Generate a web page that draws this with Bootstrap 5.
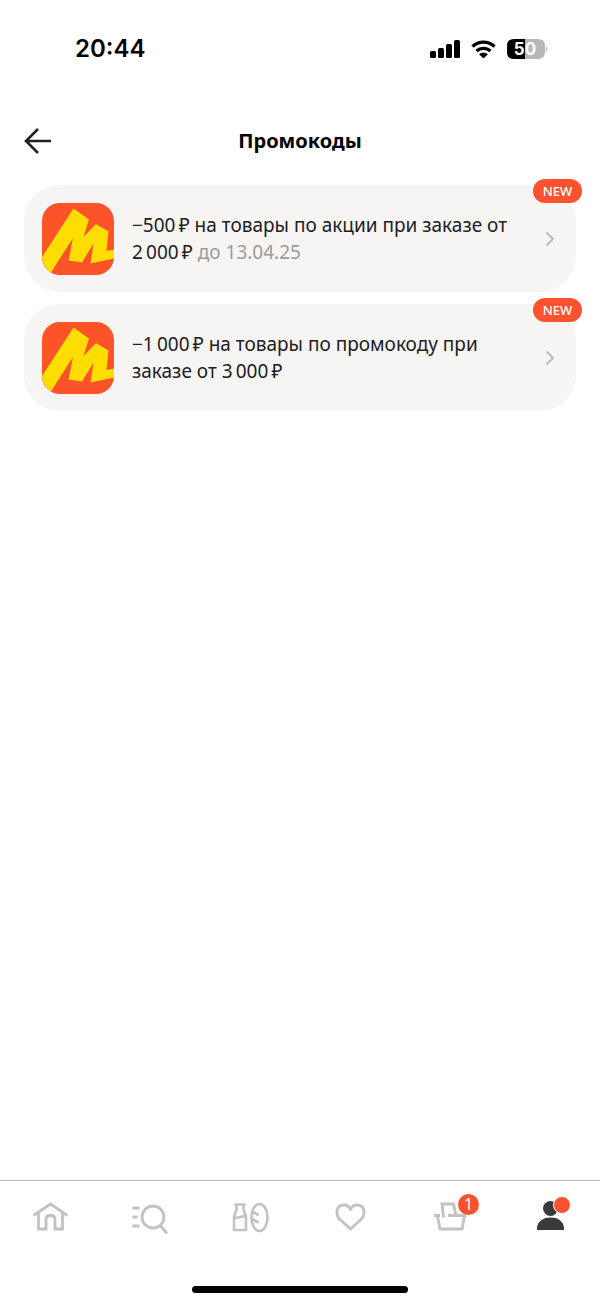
<!DOCTYPE html>
<html lang="ru">
<head>
<meta charset="utf-8">
<meta name="viewport" content="width=device-width, initial-scale=1">
<title>Промокоды</title>
<link href="https://cdn.jsdelivr.net/npm/bootstrap@5.3.0/dist/css/bootstrap.min.css" rel="stylesheet">
<style>
  body { font-family: "Noto Sans", sans-serif; background: #fff; color: #21201f; }
  .status-bar { height: 97px; padding: 0 52px 0 75px; }
  .clock { font: 600 24px/32px Inter, sans-serif; color: #000; }
  .page-head { height: 88px; padding-top: 30px; }
  .page-title { font-size: 20px; line-height: 28px; font-weight: 700; color: #000; }
  .back-btn { left: 24px; top: 28px; line-height: 0; }
  .promo-list { gap: 12px; padding: 0 24px; }
  .promo { background: #f6f5f4; border-radius: 36px; padding: 18px 18px 17px; gap: 18px; color: #21201f; font-size: 19px; line-height: 27px; }
  .promo:hover { color: #21201f; }
  .promo .until { color: #9e9b98; }
  .tag-new { top: -6px; right: -6px; width: 49px; height: 24px; border-radius: 12px; background: #fc5230; color: #fff; font-size: 13px; line-height: 24px; font-weight: 500; }
  .tab-bar { border-top: 1px solid #b9b9b9; height: 124px; background: #fff; }
  .tab-bar a { color: #c4c2bf; padding-top: 9px; line-height: 0; }
  .tab-bar a.active { color: #3b3a39; }
  .tab-icon { width: 60px; height: 50px; }
  .cart-count { left: 38px; top: 4px; width: 21px; height: 21px; background: #fc5230; color: #fff; font-size: 16px; line-height: 21px; }
  .profile-dot { left: 33px; top: 6px; width: 18px; height: 18px; background: #fc5230; border: 1px solid #fff; }
  .home-indicator { width: 36%; height: 7px; background: #000; margin-bottom: 11px; }
</style>
</head>
<body class="d-flex flex-column min-vh-100">
  <svg class="d-none" aria-hidden="true">
    <symbol id="market-logo" viewBox="0 0 72 72">
      <rect width="72" height="72" rx="18" fill="#fc5328"/>
      <path fill="#fd0" d="M0 54 31.500 5.500 47 16.500 41.500 34 54 21 66.500 28.500 64.500 48 72 46.500V55.500L48.500 60.500 51.500 40.500 40 59.500 26.500 57.500 31 35 9 69.500Q1 65 0 54Z"/>
    </symbol>
    <symbol id="chevron" viewBox="0 0 16 20">
      <path d="m5 4 6 6-6 6" fill="none" stroke="#bfbdbb" stroke-width="2" stroke-linecap="round" stroke-linejoin="round"/>
    </symbol>
  </svg>

  <div class="status-bar d-flex align-items-center justify-content-between">
    <span class="clock">20:44</span>
    <div class="d-flex align-items-center">
      <svg width="118" height="24" viewBox="0 0 118 24" role="img" aria-label="Сеть, Wi-Fi, заряд 50%">
        <rect x="0" y="14" width="6" height="7" rx="1.5"/><rect x="8" y="11" width="6" height="10" rx="1.5"/>
        <rect x="16" y="7" width="6" height="14" rx="1.5"/><rect x="24" y="3" width="6" height="18" rx="1.5"/>
        <g fill="none" stroke="#000" stroke-width="3.4"><path d="M42.5 9.5a16 16 0 0 1 22 0M46.5 14a10.500 10.500 0 0 1 14 0"/></g>
        <path d="M49 17.200a6.500 6.500 0 0 1 9 0L53.500 21.500Z"/>
        <path d="M84 2h11v20H84q-7 0-7-7V9q0-7 7-7Z"/><path fill="#b8b8b8" d="M95 2h13q7 0 7 7v6q0 7-7 7H95ZM116 9q3 3 0 6Z"/>
        <text x="95" y="18" text-anchor="middle" fill="#fff" font-family="Inter, sans-serif" font-size="17" font-weight="700">50</text>
      </svg>
    </div>
  </div>

  <header class="page-head position-relative text-center">
    <button type="button" class="btn border-0 p-0 back-btn position-absolute" aria-label="Назад">
      <svg width="28" height="32" viewBox="0 0 28 32" fill="none" stroke="#21201f" stroke-width="2.600"><path d="M27 16H3M14 4 2 16l12 12"/></svg>
    </button>
    <h1 class="page-title m-0">Промокоды</h1>
  </header>

  <main class="promo-list d-flex flex-column flex-grow-1">
    <a href="#" class="promo d-flex align-items-center position-relative text-decoration-none">
      <svg class="flex-shrink-0" width="72" height="72" role="img" aria-label="Маркет"><use href="#market-logo"/></svg>
      <span class="flex-grow-1">−500&#8201;₽ на товары по акции при заказе от<br>2&#8201;000&#8201;₽ <span class="until">до 13.04.25</span></span>
      <svg class="flex-shrink-0" width="16" height="20" aria-hidden="true"><use href="#chevron"/></svg>
      <span class="tag-new position-absolute text-center">NEW</span>
    </a>
    <a href="#" class="promo d-flex align-items-center position-relative text-decoration-none">
      <svg class="flex-shrink-0" width="72" height="72" role="img" aria-label="Маркет"><use href="#market-logo"/></svg>
      <span class="flex-grow-1">−1&#8201;000&#8201;₽ на товары по промокоду при<br>заказе от 3&#8201;000&#8201;₽</span>
      <svg class="flex-shrink-0" width="16" height="20" aria-hidden="true"><use href="#chevron"/></svg>
      <span class="tag-new position-absolute text-center">NEW</span>
    </a>
  </main>

  <footer class="tab-bar d-flex flex-column justify-content-between sticky-bottom">
    <nav class="d-flex text-center">
      <a href="#" class="flex-fill" aria-label="Главная">
        <svg class="tab-icon" viewBox="0 0 60 50" fill="none" stroke="currentColor" stroke-width="2.800"><path d="M13.500 25.500 30.500 14l17 11.500M18.500 23v16H26V29.500q0-4 4.500-4t4.500 4V39h7.500V23"/></svg>
      </a>
      <a href="#" class="flex-fill" aria-label="Каталог">
        <svg class="tab-icon" viewBox="0 0 60 50" fill="none" stroke="currentColor" stroke-width="2.800"><path d="M12.500 18h7M12.500 27h5M12.500 36h7M40 35l7 8.500"/><circle cx="33" cy="27" r="11"/></svg>
      </a>
      <a href="#" class="flex-fill" aria-label="Продукты">
        <svg class="tab-icon" viewBox="0 0 60 50" fill="none" stroke="currentColor" stroke-width="2.600" stroke-linejoin="round"><path d="M14.500 14.500h11M16.500 14.500v4q0 2-1 4l-1.500 4V40h12V26.500l-1.500-4q-1-2-1-4v-4M14 28q3 0 6-1t6-1"/><ellipse cx="39.500" cy="27.500" rx="8" ry="13.500"/><path d="m32 21.500 6.500 3.500M32 29l6.500 3.500"/></svg>
      </a>
      <a href="#" class="flex-fill" aria-label="Избранное">
        <svg class="tab-icon" viewBox="0 0 60 50" fill="none" stroke="currentColor" stroke-width="2.800" stroke-linejoin="round"><path d="M30.500 39 19.500 29Q17 26.500 17 22.500 17 15 24 15q4.500 0 6.500 4.500Q32.500 15 37 15q7 0 7 7.500 0 4-2.500 6.500Z"/></svg>
      </a>
      <a href="#" class="flex-fill" aria-label="Корзина">
        <span class="position-relative d-inline-block">
          <svg class="tab-icon" viewBox="0 0 60 50" fill="none" stroke="currentColor" stroke-width="2.800"><path d="M14 25.500h6M28 25.500h18M17.500 26 20 39h22l2.500-13M23.500 27.500 22 14h11.500l2.500 11.500"/></svg>
          <span class="cart-count position-absolute rounded-circle">1</span>
        </span>
      </a>
      <a href="#" class="flex-fill active" aria-label="Профиль" aria-current="page">
        <span class="position-relative d-inline-block">
          <svg class="tab-icon" viewBox="0 0 60 50" fill="currentColor"><circle cx="30.500" cy="18.500" r="7.500"/><path d="M17 40v-3q2-9.500 13.500-9.500T44 37v3Z"/></svg>
          <span class="profile-dot position-absolute rounded-circle"></span>
        </span>
      </a>
    </nav>
    <div class="home-indicator rounded-pill mx-auto"></div>
  </footer>
  <script src="https://cdn.jsdelivr.net/npm/bootstrap@5.3.0/dist/js/bootstrap.bundle.min.js"></script>
</body>
</html>
